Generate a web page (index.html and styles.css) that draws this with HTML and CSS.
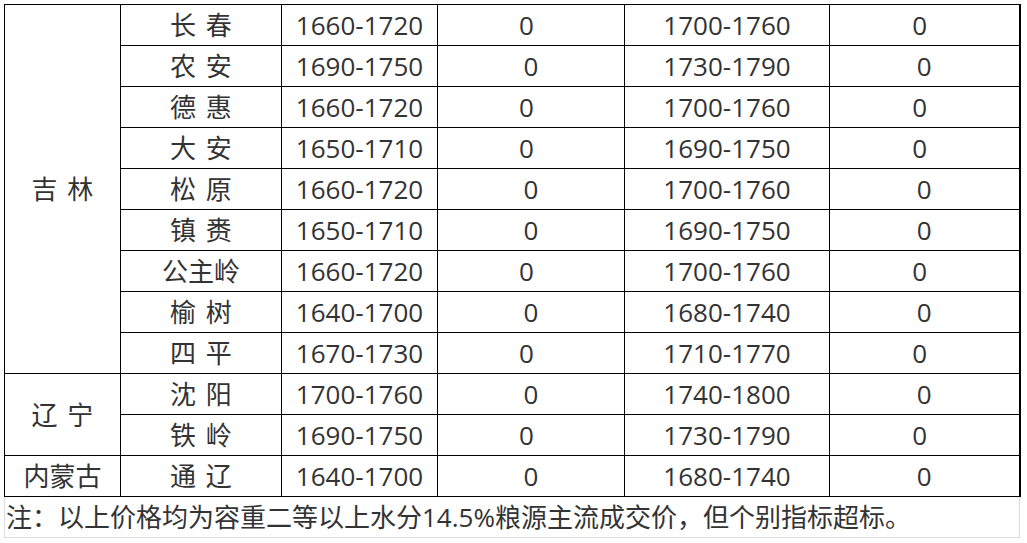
FILE: index.html
```html
<!DOCTYPE html>
<html lang="zh-CN">
<head>
<meta charset="utf-8">
<link rel="stylesheet" href="styles.css">
</head>
<body>
<div class="sheet">
<table class="price">
<colgroup>
<col class="c1"><col class="c2"><col class="c3"><col class="c4"><col class="c5"><col class="c6">
</colgroup>
<tbody>
<tr><td class="prov" rowspan="9">吉 林</td><td class="name">长 春</td><td>1660-1720</td><td class="z">0</td><td>1700-1760</td><td class="z">0</td></tr>
<tr><td class="name">农 安</td><td>1690-1750</td><td class="z s">0</td><td>1730-1790</td><td class="z s">0</td></tr>
<tr><td class="name">德 惠</td><td>1660-1720</td><td class="z">0</td><td>1700-1760</td><td class="z">0</td></tr>
<tr><td class="name">大 安</td><td>1650-1710</td><td class="z">0</td><td>1690-1750</td><td class="z">0</td></tr>
<tr><td class="name">松 原</td><td>1660-1720</td><td class="z s">0</td><td>1700-1760</td><td class="z s">0</td></tr>
<tr><td class="name">镇 赉</td><td>1650-1710</td><td class="z s">0</td><td>1690-1750</td><td class="z s">0</td></tr>
<tr><td class="name">公主岭</td><td>1660-1720</td><td class="z">0</td><td>1700-1760</td><td class="z">0</td></tr>
<tr><td class="name">榆 树</td><td>1640-1700</td><td class="z s">0</td><td>1680-1740</td><td class="z s">0</td></tr>
<tr><td class="name">四 平</td><td>1670-1730</td><td class="z">0</td><td>1710-1770</td><td class="z">0</td></tr>
<tr><td class="prov" rowspan="2">辽 宁</td><td class="name">沈 阳</td><td>1700-1760</td><td class="z s">0</td><td>1740-1800</td><td class="z s">0</td></tr>
<tr><td class="name">铁 岭</td><td>1690-1750</td><td class="z">0</td><td>1730-1790</td><td class="z">0</td></tr>
<tr><td class="prov">内蒙古</td><td class="name">通 辽</td><td>1640-1700</td><td class="z s">0</td><td>1680-1740</td><td class="z s">0</td></tr>
</tbody>
</table>
<div class="note">注：以上价格均为容重二等以上水分14.5%粮源主流成交价，但个别指标超标。</div>
</div>
</body>
</html>
```

FILE: styles.css
```css
html, body {
  margin: 0;
  padding: 0;
  background: #fff;
}
body {
  font-family: "Open Sans", "Noto Sans CJK SC", sans-serif;
  color: #333;
}
.sheet {
  padding: 4px 0 0 4px;
  width: 1016px;
}
.price {
  border-collapse: collapse;
  table-layout: fixed;
  width: 1015px;
  font-size: 26px;
}
.c1 { width: 116px; }
.c2 { width: 161px; }
.c3 { width: 156px; }
.c4 { width: 187px; }
.c5 { width: 205px; }
.c6 { width: 190px; }
.price td {
  border: 1px solid #000;
  height: 40px;
  padding: 0;
  text-align: center;
  vertical-align: middle;
  line-height: 40px;
  white-space: nowrap;
}
.price td.name,
.price td.prov {
  word-spacing: 3px;
}
.price tr td:last-child {
  border-right-width: 2px;
}
.price td.z {
  padding-right: 9px;
}
.price td.z.s {
  padding-right: 0;
}
.note {
  border: 1px solid #dcdcdc;
  border-top: none;
  width: 1013px;
  height: 40px;
  line-height: 40px;
  font-size: 26px;
  padding-left: 1px;
  white-space: nowrap;
  overflow: hidden;
}
```
